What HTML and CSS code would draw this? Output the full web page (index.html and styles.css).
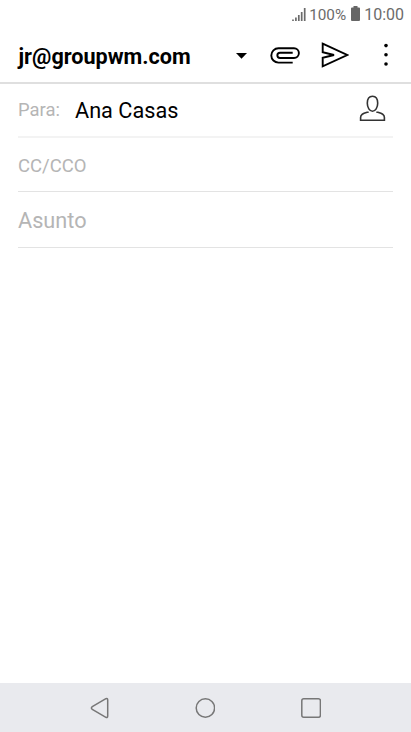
FILE: index.html
```html
<!DOCTYPE html>
<html lang="es">

<head>
    <meta charset="UTF-8">
    <meta name="viewport" content="width=device-width, initial-scale=1.0">
    <title>Redactar</title>
    <link rel="stylesheet" href="styles.css">
</head>

<body>
    <div class="status">
        <svg class="signal" width="14" height="13" viewBox="0 0 14 13">
            <path d="M1 11.500v1.500M3.900 9.500v3.500M6.800 7v6M9.700 4v9M12.700 0v13" />
        </svg>
        <span class="percent">100%</span>
        <svg class="battery" width="9" height="15" viewBox="0 0 9 15">
            <path d="M2.500 0h4v1.500H8a1 1 0 0 1 1 1V14a1 1 0 0 1-1 1H1a1 1 0 0 1-1-1V2.500a1 1 0 0 1 1-1h1.500z" />
        </svg>
        <span class="clock">10:00</span>
    </div>

    <div class="header">
        <span class="account">jr@groupwm.com</span>
        <svg class="arrow" width="11" height="6" viewBox="0 0 11 6">
            <path d="M0 0h11L5.500 5.700z" />
        </svg>
        <svg class="clip" width="30" height="17" viewBox="0 0 30 17">
            <path d="M22.700 15.600H8.500a7.200 7.200 0 0 1 0-14.400H24a4.900 4.900 0 0 1 0 9.800H10a2.650 2.650 0 0 1 0-5.300h12.700" />
        </svg>
        <svg class="send" width="28" height="26" viewBox="0 0 28 26">
            <path d="M1.700 1.700L26.200 13 1.700 24.300V15.800L13 13 1.700 10.200z" />
        </svg>
        <svg class="more" width="4" height="24" viewBox="0 0 4 24">
            <circle cx="2" cy="2.600" r="1.800" />
            <circle cx="2" cy="11.800" r="1.800" />
            <circle cx="2" cy="21" r="1.800" />
        </svg>
    </div>

    <div class="form">
        <div class="row to">
            <span class="label">Para:</span>
            <span class="name">Ana Casas</span>
            <svg class="contact" width="27" height="27" viewBox="0 0 27 27">
                <path d="M13.500 1.200c3.200 0 5.200 2.800 5.200 7.100s-2.300 7.900-5.200 7.900-5.200-3.600-5.200-7.900 2-7.100 5.200-7.100zM9.600 16.900C4.500 18.500 1.600 19 1.600 22.500v2.700h23.800v-2.700c0-3.500-2.900-4-8-5.600" />
            </svg>
        </div>
        <div class="row cc">CC/CCO</div>
        <div class="row subject">Asunto</div>
    </div>

    <div class="navbar">
        <svg width="20" height="22" viewBox="0 0 20 22">
            <path d="M16.900 1.700L3.300 9.700q-1.800 1.300 0 2.600l13.600 8q1.800.7 1.800-1.200V2.900q0-1.900-1.800-1.200z" />
        </svg>
        <svg width="20" height="22" viewBox="0 0 20 22">
            <circle cx="10.400" cy="11" r="9.200" />
        </svg>
        <svg width="20" height="22" viewBox="0 0 20 22">
            <rect x=".8" y="1.700" width="18.600" height="18.600" rx="2" />
        </svg>
    </div>
</body>

</html>
```
FILE: styles.css
```css
body {
    margin: 0;
    height: 732px;
    display: flex;
    flex-direction: column;
    overflow: hidden;
    background-color: #fff;
    font-family: Roboto, "Liberation Sans", sans-serif;
}

svg {
    display: block;
    flex: none;
    fill: none;
}

.status {
    height: 28px;
    display: flex;
    align-items: center;
    justify-content: flex-end;
    padding-right: 7px;
    color: #6b6b6b;
    font-size: 16px;
}

.signal {
    stroke: #6b6b6b;
    stroke-width: 1.7;
    margin-right: 3px;
}

.percent {
    padding-top: 1px;
    font-size: 15.3px;
}

.battery {
    fill: #666;
    margin: 0 4px 1px 5px;
}

.header {
    height: 54px;
    display: flex;
    align-items: center;
    padding-left: 18px;
    border-bottom: 2px solid #dfdfdf;
}

.account {
    width: 218px;
    padding-top: 2px;
    font-size: 21.6px;
    font-weight: bold;
    text-indent: 0.5px;
    color: #000;
}

.arrow {
    fill: #000;
    margin-top: 1px;
}

.clip {
    margin-left: 23px;
    stroke: #000;
    stroke-width: 1.9;
}

.send {
    margin-left: 21px;
    stroke: #000;
    stroke-width: 1.9;
}

.more {
    margin-left: 35px;
    fill: #000;
}

.form {
    flex: 1;
    padding: 0 18px;
}

.row {
    box-sizing: border-box;
    display: flex;
    align-items: center;
    color: #b5b5b5;
    border-bottom: 1px solid #e3e3e3;
}

.to {
    height: 54px;
    border-bottom: 2px solid #f3f3f3;
}

.label {
    width: 57px;
    padding-bottom: 2px;
    font-size: 18.4px;
}

.name {
    flex: 1;
    font-size: 21.7px;
    color: #000;
}

.contact {
    margin: 0 7.5px 3px 0;
    stroke: #333;
    stroke-width: 1.6;
}

.cc {
    height: 54px;
    padding-top: 2px;
    font-size: 18.5px;
}

.subject {
    height: 56px;
    padding-top: 2px;
    font-size: 21.7px;
}

.navbar {
    height: 49px;
    display: flex;
    align-items: center;
    justify-content: center;
    gap: 86px;
    padding-right: 1px;
    background-color: #e9eaee;
    stroke: #777;
    stroke-width: 1.5;
}
```
